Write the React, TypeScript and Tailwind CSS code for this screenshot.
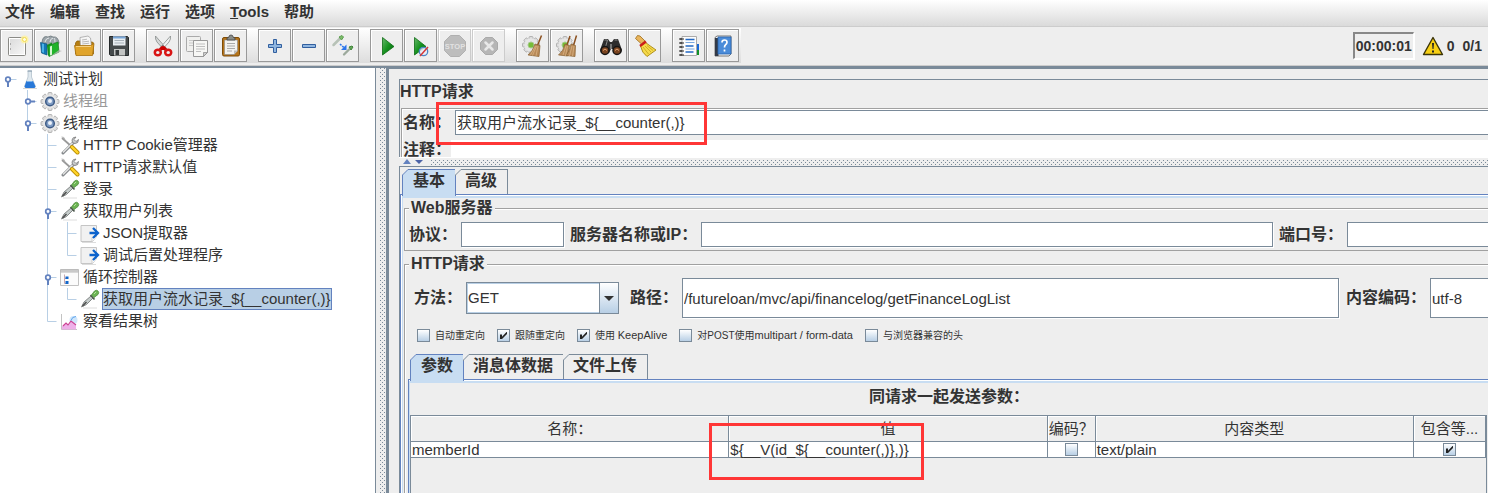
import React from "react";

type Kids = { children?: React.ReactNode };

const Glyph = ({ children }: Kids) => (
  <svg viewBox="0 0 24 24" className="size-6 shrink-0" aria-hidden="true">{children}</svg>
);
const Node = ({ children }: Kids) => (
  <svg viewBox="0 0 20 20" className="size-5 shrink-0" aria-hidden="true">{children}</svg>
);

/* Eight-toothed wheel, shared by the toolbar and the tree. */
const Wheel = ({ x, y, r }: { x: number; y: number; r: number }) => (
  <g fill="#dcdcdc" stroke="#a6a6a6" strokeWidth=".8">
    {[0, 45, 90, 135].map((a) => (
      <rect key={a} x={x - 2} y={y - r} width="4" height={2 * r} rx="1" transform={`rotate(${a} ${x} ${y})`} />
    ))}
    <circle cx={x} cy={y} r={r - 1.8} stroke="none" fill="#e6e6e6" />
  </g>
);

/* ---------- toolbar icons ---------- */
const NewIcon = () => (
  <Glyph>
    <defs><linearGradient id="paper" x1="0" y1="0" x2="1" y2="1"><stop offset="0" stopColor="#d9d9d9" /><stop offset="1" stopColor="#f8f8f8" /></linearGradient></defs>
    <rect x="3.500" y="3.500" width="17" height="18" rx="1" fill="url(#paper)" stroke="#8a8a86" />
    <rect x="4.500" y="4.500" width="15" height="16" fill="none" stroke="#fff" />
    <path d="M5.500 9v2M5.500 14v2" stroke="#aaa" />
    <circle cx="19.500" cy="5.500" r="4" fill="#fff3a0" opacity=".8" />
    <circle cx="19.500" cy="5.500" r="2" fill="#fffbe0" stroke="#f3dc4e" />
  </Glyph>
);
const TemplatesIcon = () => (
  <Glyph>
    <path d="M3 8Q4 1 9 3 12 1 14 3q5-1 6 6l-2 3H4z" fill="#9aa3a8" stroke="#6c777c" strokeWidth=".8" />
    <path d="M6 8q1-4 4-4M11 8q0-3 3-4M16 8q0-3-1-4" stroke="#e3e8ea" fill="none" />
    <path d="M1.500 8.500 8 10v11l-5.500-2z" fill="#1476b5" stroke="#0b5583" strokeWidth=".7" />
    <path d="M3 9.500 5 10v9l-2-1z" fill="#4ab2e6" />
    <path d="m8 11 5-2.500V19l-4 3z" fill="#17901f" />
    <path d="M9 12 19 8l1 10-10 4.500z" fill="#20b32a" stroke="#128319" strokeWidth=".7" />
    <path d="m11 12.500 2-.8v9l-2 .7z" fill="#d7f8d3" />
    <path d="M11 22.500 23 17l-3-1z" fill="#bbb" opacity=".7" />
  </Glyph>
);
const OpenIcon = () => (
  <Glyph>
    <path d="M2.500 9 4 7h4l1 1h10.500l1 1v11h-18z" fill="#b67d10" stroke="#93640b" strokeWidth=".8" />
    <path d="M7 3.500 15 2l2.500 2 1 9-11 1z" fill="#f6f6f6" stroke="#999" strokeWidth=".7" />
    <path d="m9 6 5-.8M9 8l7-.8M9.200 10l7-.8" stroke="#aaa" strokeWidth=".8" />
    <path d="M1.500 11.500h16l3.500-2-1.500 12H3z" fill="#e0a42b" stroke="#a87210" strokeWidth=".8" />
    <path d="M3 12.500h15" stroke="#f6d080" />
  </Glyph>
);
const SaveIcon = () => (
  <Glyph>
    <path d="M2.500 2.500h18l1 1v18h-18l-1-1z" fill="#454a4c" stroke="#25292a" />
    <path d="M6 2.500h12.500v9H6z" fill="#e8edf1" />
    <path d="M6 3.500h12.500" stroke="#78a6d8" strokeWidth="2" />
    <path d="M7.500 6.500h9.500M7.500 9h9.500" stroke="#a7b0b8" />
    <path d="M7 15h11v6.500H7z" fill="#c2c4c3" />
    <path d="M8.500 16h3.500v5H8.500z" fill="#363a3c" />
  </Glyph>
);
const CutIcon = () => (
  <Glyph>
    <path d="M4.500 2Q4 5 6 8l8 9 2-2z" fill="#d5d8d8" stroke="#858a89" strokeWidth=".8" />
    <path d="M19.500 2q.5 3-1.500 6l-8 9-2-2z" fill="#f0f2f2" stroke="#858a89" strokeWidth=".8" />
    <circle cx="12" cy="12" r="1" fill="#666" />
    <path d="m9 15.500 2-2 1 1 1-1 2 2" stroke="#c00" strokeWidth="2.500" fill="none" />
    <ellipse cx="6.800" cy="18.500" rx="3" ry="2.800" fill="none" stroke="#d91515" strokeWidth="2.500" />
    <ellipse cx="17.200" cy="18.500" rx="3" ry="2.800" fill="none" stroke="#d91515" strokeWidth="2.500" />
  </Glyph>
);
const CopyIcon = () => (
  <Glyph>
    <rect x="1.500" y="2.500" width="14" height="15" rx="1" fill="#f0f0ee" stroke="#aaa" />
    <path d="M4 6.500h9M4 9h9M4 11.500h4" stroke="#c8c8c8" />
    <path d="M8.500 6.500h14v12l-4 4h-10z" fill="#f7f7f5" stroke="#999" />
    <path d="M11 10h9M11 12.500h9M11 15h9M11 17.500h5" stroke="#bfbfbf" />
    <path d="M22.500 18.500h-4v4z" fill="#ccc" stroke="#888" strokeWidth=".7" />
  </Glyph>
);
const PasteIcon = () => (
  <Glyph>
    <rect x="3.500" y="3.500" width="17" height="18.500" rx="1.500" fill="#b5741a" stroke="#7e4d0a" />
    <path d="M5.500 6h13v11l-3.500 3.500H5.500z" fill="#f3f3f1" stroke="#888" strokeWidth=".6" />
    <path d="M8 9.500h8M8 12h8M8 14.500h8M8 17h5" stroke="#aaa" />
    <path d="M18.500 16.500H15v4z" fill="#bbb" />
    <path d="M8 6V4l2-1q0-2 2-2t2 2l2 1v2z" fill="#888c88" stroke="#444" strokeWidth=".8" />
  </Glyph>
);
const PlusIcon = () => (
  <Glyph><path d="M10.500 5.500h3v5h5v3h-5v5h-3v-5h-5v-3h5z" fill="#90b6e0" stroke="#315f9f" /></Glyph>
);
const MinusIcon = () => (
  <Glyph><path d="M5.500 10.500h13v3h-13z" fill="#90b6e0" stroke="#315f9f" /></Glyph>
);
const ToggleIcon = () => (
  <Glyph>
    <path d="m2.500 11 6-6" stroke="#b7c2b7" strokeWidth="2.500" strokeLinecap="round" />
    <path d="m8 3 2.500 3L12.500 3 11 1.500z" fill="#7dbd6b" stroke="#5c9e50" />
    <path d="m13 20.500 5-5" stroke="#9ca99c" strokeWidth="2.300" strokeLinecap="round" />
    <path d="m18 13 2 3 2-3-1-1z" fill="#63a858" stroke="#42863c" />
    <path d="m9 10 5 4.500" stroke="#2b75ec" strokeWidth="1.500" strokeDasharray="2 1" />
    <path d="M15.500 10.500v5.500H10z" fill="#2b75ec" />
  </Glyph>
);
const GreenTriangle = () => (
  <>
    <defs><linearGradient id="go" x1="0" y1="0" x2="1" y2="1"><stop offset="0" stopColor="#69b86c" /><stop offset=".5" stopColor="#169320" /><stop offset="1" stopColor="#08620f" /></linearGradient></defs>
    <path d="M7.500 3.500 19 12.500 7.500 21z" fill="url(#go)" stroke="#0c6b13" strokeWidth=".8" />
  </>
);
const StartIcon = () => <Glyph><GreenTriangle /></Glyph>;
const StartNoPauseIcon = () => (
  <Glyph>
    <g transform="translate(-2 0)"><GreenTriangle /></g>
    <circle cx="14.500" cy="17.500" r="4.200" fill="#e9eef7" fillOpacity=".8" stroke="#4b86c6" strokeWidth="1.300" />
    <path d="m11 22 8-9" stroke="#d63838" strokeWidth="1.500" />
  </Glyph>
);
const StopIcon = () => (
  <Glyph>
    <path d="M7.500 1.500h9l6 6v9l-6 6h-9l-6-6v-9z" fill="#bdbdbd" stroke="#b0b0b0" />
    <text x="12" y="15" textAnchor="middle" fontSize="7.500" fontWeight="700" fill="#e2e2e2" fontFamily="Liberation Sans, sans-serif">STOP</text>
  </Glyph>
);
const ShutdownIcon = () => (
  <Glyph>
    <path d="M8.500 3.500h7l5 5v7l-5 5h-7l-5-5v-7z" fill="#b6b6b6" stroke="#aaa" />
    <path d="m8.500 8.500 7 7m0-7-7 7" stroke="#e8e8e8" strokeWidth="2.500" strokeLinecap="round" />
  </Glyph>
);
const Gear = () => (
  <>
    <Wheel x={10} y={11} r={8.500} />
    <circle cx="10" cy="11" r="3" fill="#77bd38" stroke="#a4c98a" />
  </>
);
const ClearIcon = () => (
  <Glyph>
    <Gear />
    <path d="m20.500 1.500-4 10" stroke="#8a4f1e" strokeWidth="1.500" />
    <path d="m14 10 5 1.500-1 11-11-1.500q5-4 7-11z" fill="#b98a58" stroke="#87602f" strokeWidth=".7" />
    <path d="m15.500 12-4 9.500M17 12l-2 10M14.500 12 9.500 21" stroke="#ddb98b" strokeWidth=".7" />
  </Glyph>
);
const ClearAllIcon = () => (
  <Glyph>
    <Gear />
    <path d="m15 2-3 9M21.500 1.500l-3 10" stroke="#8a4f1e" strokeWidth="1.500" />
    <path d="m10 10 4.500 1.500-2 10.500-9-1q5-4 6.500-11z" fill="#b98a58" stroke="#87602f" strokeWidth=".7" />
    <path d="m16 10 4.500 1.500-.5 11-9-1q4-4 5-11.500z" fill="#b98a58" stroke="#87602f" strokeWidth=".7" />
    <path d="m11 12-3 9M12.500 12l-2 10M17 12l-2.500 10M19 12l-1.500 10" stroke="#ddb98b" strokeWidth=".7" />
  </Glyph>
);
const SearchIcon = () => (
  <Glyph>
    <path d="M5 5h4l2 3h2l2-3h4l4 11-1 3h-6l-2-4h-2l-2 4H2l-1-3z" fill="#2d2d2d" />
    <path d="M5.500 6h3l-2 7M18.500 6h-3" stroke="#888" fill="none" />
    <circle cx="6" cy="16.500" r="4" fill="#7a4420" stroke="#151515" strokeWidth="1.500" />
    <circle cx="18" cy="16.500" r="4" fill="#7a4420" stroke="#151515" strokeWidth="1.500" />
    <path d="M4 16.500q2-3 4 0M16 16.500q2-3 4 0" stroke="#e0a477" fill="none" />
    <path d="M11 10h2v5h-2z" fill="#777" />
  </Glyph>
);
const BroomIcon = () => (
  <Glyph>
    <path d="m2.500 4.500 2-3 2.500.5 5 5-3.500 3z" fill="#e9b55c" stroke="#9d6b17" strokeWidth=".8" />
    <path d="M12.500 8.500q4 3 10.500 7.500l-9 6.500Q9 19 7.500 12z" fill="#f5da4a" stroke="#a78611" strokeWidth=".9" />
    <path d="m10 13 5.500 7M12 12l6 6M14 11.500l6 5" stroke="#c7a31e" strokeWidth=".8" />
    <path d="m7 12 6-4.500" stroke="#cc1f1a" strokeWidth="2.500" />
  </Glyph>
);
const ListIcon = () => (
  <Glyph>
    <path d="M5 2.500h14.500v19H5z" fill="#fdfdfd" stroke="#aaa" />
    <path d="M20 10h2v6h-2z" fill="#1968d6" /><path d="M20 16h2v5h-2z" fill="#129228" />
    <path d="M8.500 5.500h9M8.500 12h8M8.500 18h8" stroke="#2268c4" strokeWidth="1.300" />
    <path d="M8.500 8.500h9M8.500 15h9" stroke="#7ba8df" strokeWidth="1.200" />
    <path d="M2 5h5M2 9h5M2 13h5M2 17h5M2 21h5" stroke="#222" strokeWidth="1.200" />
    <path d="M4 4v2M4 8v2M4 12v2M4 16v2M4 20v2" stroke="#222" />
  </Glyph>
);
const HelpIcon = () => (
  <Glyph>
    <path d="M4 3.500 6 2h14v18l-2 2H4z" fill="#f5f5f5" stroke="#555" strokeWidth=".8" />
    <path d="M4 4h3.500v18H4z" fill="#333a48" />
    <path d="M7 3h13v17H7z" fill="#4b8cd9" stroke="#2964ae" strokeWidth=".8" />
    <path d="M11 8.500q0-2.500 2.500-2.500T16 8.300q0 1.500-1.500 2.500-1 .8-1 2.700M13.500 15.500v2" stroke="#fff" strokeWidth="1.700" fill="none" />
  </Glyph>
);

type Tool = { name: string; icon: React.ReactNode; off?: boolean };
const toolGroups: Tool[][] = [
  [{ name: "新建", icon: <NewIcon /> }, { name: "模板", icon: <TemplatesIcon /> }, { name: "打开", icon: <OpenIcon /> }, { name: "保存", icon: <SaveIcon /> }],
  [{ name: "剪切", icon: <CutIcon /> }, { name: "复制", icon: <CopyIcon /> }, { name: "粘贴", icon: <PasteIcon /> }],
  [{ name: "展开", icon: <PlusIcon /> }, { name: "折叠", icon: <MinusIcon /> }, { name: "切换", icon: <ToggleIcon /> }],
  [{ name: "启动", icon: <StartIcon /> }, { name: "不停顿启动", icon: <StartNoPauseIcon /> }, { name: "停止", icon: <StopIcon />, off: true }, { name: "关闭", icon: <ShutdownIcon />, off: true }],
  [{ name: "清除", icon: <ClearIcon /> }, { name: "清除全部", icon: <ClearAllIcon /> }],
  [{ name: "查找", icon: <SearchIcon /> }, { name: "重置查找", icon: <BroomIcon /> }],
  [{ name: "函数助手", icon: <ListIcon /> }, { name: "帮助", icon: <HelpIcon /> }],
];

/* ---------- tree icons ---------- */
const FlaskIcon = () => (
  <Node>
    <path d="M8 2h3.500v6l4 9.500-1 1.500h-9l-1-1.500L8 8z" fill="#dfe8ee" stroke="#b3c2cd" strokeWidth=".8" />
    <path d="M6.500 12h6.500l2.500 5.500-1 1.500h-9l-1-1.500z" fill="#2878d8" />
    <path d="M7 12.500h5.500" stroke="#7db5ee" /><path d="M3 19.500h14" stroke="#d5d5d5" />
    <path d="M7.500 2h4.500" stroke="#8499aa" />
  </Node>
);
const GearIcon = () => (
  <Node>
    <Wheel x={10} y={10.500} r={9} />
    <circle cx="10" cy="10.500" r="4.300" fill="#7f9cc4" stroke="#3d5b86" strokeWidth="1.500" />
    <circle cx="10" cy="10" r="2" fill="#eef3fa" />
  </Node>
);
const ToolsIcon = () => (
  <Node>
    <path d="m2 3 9 8" stroke="#999" strokeWidth="1.700" />
    <path d="m1.500 2 2.500.5 1 2" fill="none" stroke="#bbb" />
    <path d="M3 18 14 7" stroke="#85898c" strokeWidth="3" strokeLinecap="round" />
    <path d="M3 17.500 14 6.500" stroke="#e8e8e8" strokeWidth="1.200" />
    <path d="M18.500 4.500q0 4-3.500 4t-3-3.500Q12.500 2 16 2l-2 2.500 2 2z" fill="#c9cccd" stroke="#777" strokeWidth=".8" />
    <path d="m12 12 5.500 5.500" stroke="#b98c00" strokeWidth="4" strokeLinecap="round" />
    <path d="m12 12 5.500 5.500" stroke="#ffd52a" strokeWidth="2.400" strokeLinecap="round" />
  </Node>
);
const DropperIcon = () => (
  <Node>
    <path d="M3 19h14" stroke="#ddd" />
    <path d="m1.500 18 2.500-5 7-6 2 2-6.500 6.500z" fill="#c5cccb" stroke="#7b7f7e" strokeWidth=".9" />
    <path d="m2.500 17 4-4" stroke="#4c4c4c" strokeWidth="1.500" />
    <path d="m10.500 6 4 4.500" stroke="#4a544a" strokeWidth="1.600" />
    <path d="m11.500 6 3-4q2-1.500 3.500 0t0 3.500l-4 3z" fill="#6db554" stroke="#4b8a3a" strokeWidth=".8" />
    <path d="m14 5 2-2" stroke="#b5e29e" />
  </Node>
);
const PostIcon = () => (
  <Node>
    <path d="M1 2.500h15.500v11l-4 5H1z" fill="#f1f1f1" stroke="#c5c5c5" />
    <path d="M12 18.500v-4l5-1" fill="#fff" stroke="#ccc" />
    <path d="M2 19.500h14" stroke="#ddd" />
    <path d="M9.500 10H17M13 5l5 5-5 5" fill="none" stroke="#0d63cc" strokeWidth="2.300" />
  </Node>
);
const LoopIcon = () => (
  <Node>
    <path d="M.5 2.500h18v16H.5z" fill="#fbfbfb" stroke="#c2c2c2" />
    <path d="M.5 2.500h18v3H.5z" fill="#b5b5b5" /><path d="M1 4h17" stroke="#ddd" />
    <path d="M4.500 7.500v9h3M4.500 11.500h3" stroke="#c7a8b0" fill="none" />
    <path d="M5.500 9.500h3v2.500h-3zM5.500 14h3v3h-3z" fill="#1267cb" />
  </Node>
);
const ResultIcon = () => (
  <Node>
    <path d="M1.500 3v15.500H17" stroke="#c3c3c3" fill="none" />
    <circle cx="13.500" cy="9" r="4" fill="#cfe6fb" />
    <path d="m2 15 4-3 2 2 3-4 5 4v4.500H2z" fill="#eeb0e8" />
    <path d="m3 15 3-3 2 2 3-4 5 4" fill="none" stroke="#cc4292" strokeWidth="1.100" />
    <path d="M16 5.500q-4 0-5 4" fill="none" stroke="#5ea4ed" />
  </Node>
);

type Guide = "blank" | "pass" | "tee" | "end" | "open" | "openLast" | "shut" | "root";
const GuideCell = ({ kind }: { kind: Guide }) => {
  const up = kind !== "blank" && kind !== "root";
  const down = kind === "pass" || kind === "tee" || kind === "open" || kind === "shut";
  const dash = kind !== "blank" && kind !== "pass";
  const knob = kind === "open" || kind === "openLast" || kind === "shut" || kind === "root";
  return (
    <svg viewBox="0 0 20 22" className="h-[22px] w-5 shrink-0" aria-hidden="true">
      <g stroke="#b8cfe5" fill="none">
        {up && <path d="M7.500 0v11.500" />}
        {down && <path d="M7.500 11v11" />}
        {dash && <path d="M7.500 11.500h9" />}
      </g>
      {knob && (
        <g stroke="#6382bf" strokeWidth="2">
          {kind === "shut" ? <path d="M10 11.500h5" /> : <path d="M8 13v6" />}
          <circle cx="8" cy="11.500" r="2.300" fill="#fff" strokeWidth="1.700" />
        </g>
      )}
    </svg>
  );
};

type Row = { guides: Guide[]; icon: React.ReactNode; text: string; dim?: boolean; picked?: boolean };
const rows: Row[] = [
  { guides: ["root"], icon: <FlaskIcon />, text: "测试计划" },
  { guides: ["blank", "shut"], icon: <GearIcon />, text: "线程组", dim: true },
  { guides: ["blank", "openLast"], icon: <GearIcon />, text: "线程组" },
  { guides: ["blank", "blank", "tee"], icon: <ToolsIcon />, text: "HTTP Cookie管理器" },
  { guides: ["blank", "blank", "tee"], icon: <ToolsIcon />, text: "HTTP请求默认值" },
  { guides: ["blank", "blank", "tee"], icon: <DropperIcon />, text: "登录" },
  { guides: ["blank", "blank", "open"], icon: <DropperIcon />, text: "获取用户列表" },
  { guides: ["blank", "blank", "pass", "tee"], icon: <PostIcon />, text: "JSON提取器" },
  { guides: ["blank", "blank", "pass", "end"], icon: <PostIcon />, text: "调试后置处理程序" },
  { guides: ["blank", "blank", "open"], icon: <LoopIcon />, text: "循环控制器" },
  { guides: ["blank", "blank", "pass", "end"], icon: <DropperIcon />, text: "获取用户流水记录_${__counter(,)}", picked: true },
  { guides: ["blank", "blank", "end"], icon: <ResultIcon />, text: "察看结果树" },
];

const Tree = () => (
  <ul role="tree" className="text-[15px] leading-5">
    {rows.map((r, i) => (
      <li key={i} role="treeitem" aria-selected={!!r.picked} className="flex h-[22px] items-center">
        {r.guides.map((g, j) => <GuideCell key={j} kind={g} />)}
        {r.icon}
        <span
          className={
            r.picked
              ? "ml-0.5 border border-[#6382bf] bg-[#b8cfe5] whitespace-nowrap"
              : r.dim
                ? "ml-[3px] whitespace-nowrap text-[#999]"
                : "ml-[3px] whitespace-nowrap"
          }
        >
          {r.text}
        </span>
      </li>
    ))}
  </ul>
);

/* ---------- form parts ---------- */
const Caption = ({ htmlFor, children }: Kids & { htmlFor: string }) => (
  <label htmlFor={htmlFor} className="shrink-0 text-base leading-5 font-bold whitespace-nowrap">{children}</label>
);

const Check = ({ id, label, on }: { id: string; label?: string; on?: boolean }) => (
  <span className="relative inline-flex size-[13px] shrink-0">
    <input
      id={id}
      type="checkbox"
      defaultChecked={on}
      aria-label={label}
      className="peer size-[13px] appearance-none border border-[#7a8a99] bg-linear-to-b from-white to-[#b8cfe5]"
    />
    <svg viewBox="0 0 13 13" className="pointer-events-none absolute inset-0 hidden size-[13px] peer-checked:block" aria-hidden="true">
      <path d="M3 5.500h2v2.200L9.500 3H10v2L5 10H3z" fill="#222" />
    </svg>
  </span>
);

const CheckField = ({ id, on, children }: Kids & { id: string; on?: boolean }) => (
  <label htmlFor={id} className="flex items-center gap-[5px] text-[10px] leading-4 whitespace-nowrap">
    <Check id={id} on={on} />
    <span>{children}</span>
  </label>
);

const Tabs = ({ names }: { names: string[] }) => (
  <div role="tablist" className="relative z-10 flex">
    {names.map((n, i) => (
      <button
        key={n}
        type="button"
        role="tab"
        aria-selected={i === 0}
        className={
          i === 0
            ? "relative -mb-0.5 h-[27px] border-x border-t border-[#6382bf] bg-[#c8ddf2] px-2.5 pb-1 text-base leading-5 font-bold"
            : "relative h-[25px] border-t border-r border-[#7a8a99] pr-2.5 pb-0.5 pl-[9px] text-base leading-5 font-bold"
        }
      >
        <svg viewBox="0 0 7 7" className="absolute -top-px -left-px size-[7px]" aria-hidden="true">
          <path d="M0 0h6.500L0 6.500z" fill="#eee" />
          <path d="M.5 7V6L6 .5h1" fill="none" stroke={i === 0 ? "#6382bf" : "#7a8a99"} />
        </svg>
        {n}
      </button>
    ))}
  </div>
);

const fieldClass = "min-w-0 border border-[#7a8a99] bg-white px-px text-[15px] outline-none shadow-[1px_1px_0_#fff]";
const lastFieldClass = "border-y border-l border-[#7a8a99] bg-white px-px text-[15px] outline-none";
const groupClass = "min-w-0 border-t border-l border-[#a0a0a0] shadow-[inset_1px_1px_0_#fff]";
const legendClass = "ml-1 bg-[#eee] px-0.5 text-base leading-[18px] font-bold";
const headClass = "border border-[#7a8a99] p-0 font-normal shadow-[inset_1px_1px_0_#fff]";
/* Staggered bumps of a split-pane grip, on a 4px grid. */
const dots =
  "bg-[radial-gradient(circle_at_0.5px_0.5px,#7a8a99_0.7px,transparent_0.8px),radial-gradient(circle_at_2.5px_2.5px,#7a8a99_0.7px,transparent_0.8px)] bg-size-[4px_4px]";

export default function App() {
  return (
    <div className="flex min-h-screen flex-col overflow-hidden bg-[#eee] font-['Liberation_Sans','Noto_Sans_CJK_SC',sans-serif] text-[#333]">
      <nav className="flex h-[27px] items-center gap-[15px] border-b border-[#ccc] bg-linear-to-b from-white to-[#dadada] px-[5px] pb-0.5 text-[15px] leading-5 font-bold">
        <button type="button">文件</button>
        <button type="button">编辑</button>
        <button type="button">查找</button>
        <button type="button">运行</button>
        <button type="button">选项</button>
        <button type="button"><span className="underline">T</span>ools</button>
        <button type="button">帮助</button>
      </nav>

      <header className="flex h-[39px] items-center justify-between border-b border-[#ccc] pb-px">
        <div className="flex gap-[11px] bg-linear-to-b from-white to-[#ddd] py-px pr-0.5">
          {toolGroups.map((g, i) => (
            <div key={i} className="flex gap-px">
              {g.map((t) => (
                <button
                  key={t.name}
                  type="button"
                  aria-label={t.name}
                  disabled={t.off}
                  className="flex size-[33px] items-center justify-center border border-[#999] bg-[#eee] shadow-[inset_1px_1px_0_#fff] disabled:border-[#ccc]"
                >
                  {t.icon}
                </button>
              ))}
            </div>
          ))}
        </div>
        <div className="flex items-center pr-1.5 text-sm leading-5 font-bold">
          <output className="mr-2 border-t-2 border-r border-b border-l-2 border-t-[#888] border-r-white border-b-white border-l-[#888] px-px py-0.5 shadow-[1px_1px_0_#fff]">00:00:01</output>
          <svg viewBox="0 0 22 20" className="mr-[3px] h-5 w-[22px]" aria-hidden="true">
            <path d="M11 1.500 20.500 18.500h-19z" fill="#f7cf13" stroke="#3b3408" strokeWidth="1.400" strokeLinejoin="round" />
            <path d="M10 7h2l-.5 6h-1zM10 14.500h2v2h-2z" fill="#222" />
          </svg>
          <span className="mr-2">0</span>
          <span>0/1</span>
        </div>
      </header>

      <div className="flex min-w-0 flex-1 border-t-2 border-[#7a8a99]">
        <aside className="w-[376px] shrink-0 border-r border-[#7a8a99] bg-white">
          <Tree />
        </aside>
        <div className="flex w-[13px] shrink-0 justify-end border-r-3 border-[#7a8a99]">
          <div className={`mr-px w-[5px] ${dots}`} />
        </div>

        <main className="flex min-w-0 flex-1 flex-col border-t border-[#7a8a99] pt-2.5 pl-2.5">
          <section className="h-[78px] overflow-hidden border-t border-l border-[#7a8a99]">
            <h1 className="h-7 pt-0.5 text-base leading-5 font-bold">HTTP请求</h1>
            <div className="ml-px border-t border-l border-[#a0a0a0] shadow-[inset_1px_1px_0_#fff]">
              <div className="relative flex items-center gap-1 pt-px pl-px">
                <Caption htmlFor="name">名称：</Caption>
                <input id="name" defaultValue="获取用户流水记录_${__counter(,)}" className={`${lastFieldClass} h-[25px] min-w-0 flex-1 pb-0.5`} />
                <span className="pointer-events-none absolute -top-[7px] left-[34px] h-[43px] w-[271px] border-3 border-[#ff3636]" />
              </div>
              <div className="mt-[5px] flex pl-px">
                <Caption htmlFor="note">注释：</Caption>
                <input id="note" className="h-[26px] min-w-0 flex-1 bg-white outline-none" />
              </div>
            </div>
          </section>

          <div className="flex h-[9px] items-center border-t border-white">
            <svg viewBox="0 0 24 6" className="mr-1 ml-1 h-1.5 w-6 shrink-0" aria-hidden="true">
              <path d="m0 5 4-5 4 5z" fill="#6382bf" /><path d="M12 1h8l-4 4z" fill="#4c63a6" />
            </svg>
            <div className={`h-[5px] flex-1 ${dots}`} />
          </div>

          <section className="flex flex-1 flex-col border-t border-l border-[#7a8a99]">
            <div className="pt-0.5 pl-0.5"><Tabs names={["基本", "高级"]} /></div>
            <div className="flex-1 border-t border-l border-[#6382bf]">
              <div className="flex h-full flex-col border-t border-l border-white">
                <div className="flex-1 border-t-2 border-l border-[#c8ddf2] pt-px pl-px">
                  <fieldset className={`${groupClass} border-b`}>
                    <legend className={legendClass}>Web服务器</legend>
                    <div className="flex items-center gap-1 pt-[5px] pb-[3px] pl-1">
                      <Caption htmlFor="protocol">协议：</Caption>
                      <input id="protocol" className={`${fieldClass} mr-0.5 h-[25px] w-[103px]`} />
                      <Caption htmlFor="server">服务器名称或IP：</Caption>
                      <input id="server" className={`${fieldClass} mr-0.5 h-[25px] flex-1`} />
                      <Caption htmlFor="port">端口号：</Caption>
                      <input id="port" className={`${lastFieldClass} h-[25px] w-[141px] shrink-0`} />
                    </div>
                  </fieldset>

                  <fieldset className={`${groupClass} mt-1`}>
                    <legend className={legendClass}>HTTP请求</legend>
                    <div className="flex items-center gap-1 pt-[5px] pl-[9px]">
                      <Caption htmlFor="method">方法：</Caption>
                      <span className="relative mr-[7px] inline-flex h-8 w-[153px] shrink-0">
                        <select id="method" defaultValue="GET" className="w-full appearance-none border border-[#7a8a99] bg-white px-px text-[15px] shadow-[inset_0_0_0_1px_#b8cfe5] outline-none">
                          <option>GET</option>
                          <option>POST</option>
                        </select>
                        <span className="pointer-events-none absolute inset-y-0 right-0 flex w-5 items-center justify-center border border-[#7a8a99] bg-linear-to-b from-white to-[#b8cfe5]">
                          <svg viewBox="0 0 10 5" className="h-[5px] w-2.5" aria-hidden="true"><path d="M0 0h10L5 5z" fill="#333" /></svg>
                        </span>
                      </span>
                      <Caption htmlFor="path">路径：</Caption>
                      <input id="path" defaultValue="/futureloan/mvc/api/financelog/getFinanceLogList" className={`${fieldClass} mr-[3px] h-10 flex-1`} />
                      <Caption htmlFor="encoding">内容编码：</Caption>
                      <input id="encoding" defaultValue="utf-8" className={`${lastFieldClass} h-10 w-[58px] shrink-0`} />
                    </div>
                    <div className="flex items-center gap-3 pt-[9px] pb-2.5 pl-3">
                      <CheckField id="auto">自动重定向</CheckField>
                      <CheckField id="follow" on>跟随重定向</CheckField>
                      <CheckField id="keep" on>使用 <span className="text-[11px]">KeepAlive</span></CheckField>
                      <CheckField id="multi">对POST使用<span className="text-[11px]">multipart / form-data</span></CheckField>
                      <CheckField id="compat">与浏览器兼容的头</CheckField>
                    </div>

                    <div className="pl-[5px]"><Tabs names={["参数", "消息体数据", "文件上传"]} /></div>
                    <div className="ml-[3px] border-t border-l border-[#6382bf]">
                      <div className="border-t border-white">
                        <div className="min-h-28 border-t-2 border-l border-[#c8ddf2]">
                          <h2 className="h-8 pt-1 text-center text-base leading-5 font-bold">同请求一起发送参数：</h2>
                          <div className="mr-px min-h-20 border-x border-[#7a8a99]">
                            <table className="-ml-px w-[calc(100%+1px)] table-fixed border-collapse text-[15px] leading-[15px]">
                              <colgroup>
                                <col /><col />
                                <col className="w-12" />
                                <col />
                                <col className="w-[72px]" />
                              </colgroup>
                              <thead>
                                <tr className="h-[26px]">
                                  <th className={headClass}>名称：</th>
                                  <th className={headClass}>值</th>
                                  <th className={`${headClass} whitespace-nowrap`}>编码？</th>
                                  <th className={headClass}>内容类型</th>
                                  <th className={headClass}>包含等...</th>
                                </tr>
                              </thead>
                              <tbody className="bg-white">
                                <tr className="h-4">
                                  <td className="border border-[#7a8a99] px-px py-0">memberId</td>
                                  <td className="relative border border-[#7a8a99] px-px py-0">
                                    {"${__V(id_${__counter(,)},)}"}
                                    <span className="pointer-events-none absolute -top-[19px] -left-5 h-[57px] w-[215px] border-3 border-[#ff3636]" />
                                  </td>
                                  <td className="border border-[#7a8a99] p-0">
                                    <div className="flex justify-center"><Check id="encode" label="编码？" /></div>
                                  </td>
                                  <td className="border border-[#7a8a99] px-px py-0">text/plain</td>
                                  <td className="border border-[#7a8a99] p-0">
                                    <div className="flex justify-center"><Check id="equals" label="包含等于" on /></div>
                                  </td>
                                </tr>
                              </tbody>
                            </table>
                          </div>
                        </div>
                      </div>
                    </div>
                  </fieldset>
                </div>
              </div>
            </div>
          </section>
        </main>
      </div>
    </div>
  );
}
